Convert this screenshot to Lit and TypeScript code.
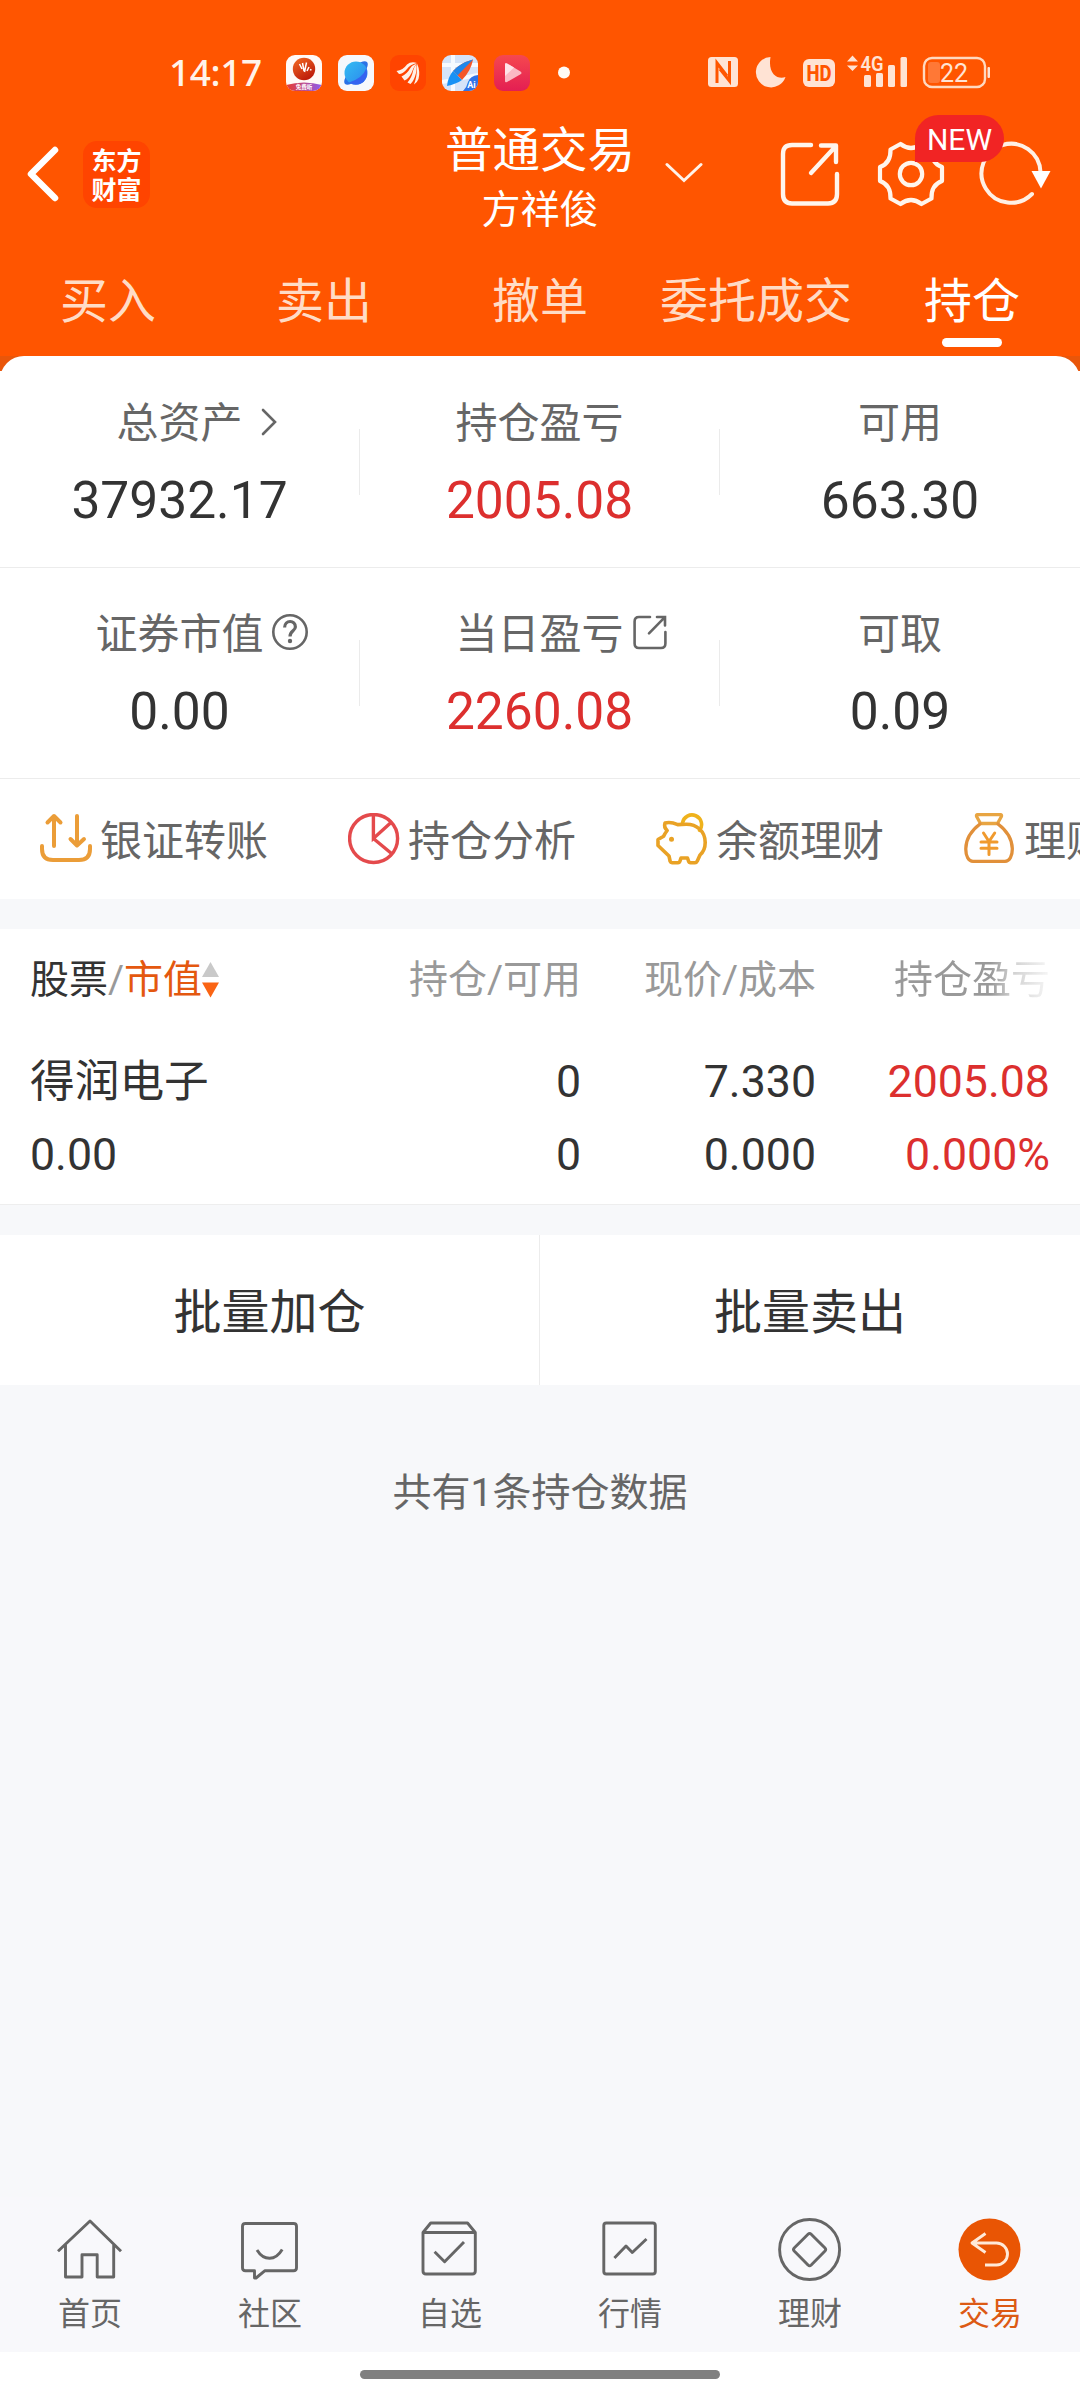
import { LitElement, html, svg, css, nothing, TemplateResult } from "lit";
import { customElement } from "lit/decorators.js";
import { classMap } from "lit/directives/class-map.js";

type Glyph = TemplateResult;

interface AssetCell {
  label: string;
  value: string;
  up?: boolean;
  icon?: "chevron" | "help" | "share";
}

const assetRows: AssetCell[][] = [
  [
    { label: "总资产", value: "37932.17", icon: "chevron" },
    { label: "持仓盈亏", value: "2005.08", up: true },
    { label: "可用", value: "663.30" },
  ],
  [
    { label: "证券市值", value: "0.00", icon: "help" },
    { label: "当日盈亏", value: "2260.08", up: true, icon: "share" },
    { label: "可取", value: "0.09" },
  ],
];

const tabs = ["买入", "卖出", "撤单", "委托成交", "持仓"];

const labelIcons: Record<string, Glyph> = {
  chevron: html`<svg class="licon chev" width="16" height="28" viewBox="0 0 16 28">
    <path d="M2 2 L14 14 L2 26" fill="none" stroke="#666" stroke-width="2.6" stroke-linecap="round" />
  </svg>`,
  help: html`<svg class="licon help" width="38" height="38" viewBox="0 0 38 38">
    <circle cx="19" cy="19" r="16.7" fill="none" stroke="#666" stroke-width="2.6" />
    <path d="M13.6 14.6 C13.6 6.6 24.6 6.6 24.4 14 C24.2 18 19 17.6 19 23.4" fill="none" stroke="#666" stroke-width="3.2" />
    <circle cx="19" cy="28" r="2.2" fill="#666" />
  </svg>`,
  share: html`<svg class="licon share" width="34" height="35" viewBox="0 0 34 35">
    <g fill="none" stroke="#666" stroke-width="2.6" stroke-linecap="round">
      <path d="M17 2 H6 Q1.6 2 1.6 6.5 V28.5 Q1.6 33 6 33 H28 Q32.4 33 32.4 28.5 V17" />
      <path d="M24 2 H32 V10.5 M31.4 2.6 L16 18.4" />
    </g>
  </svg>`,
};

const shortcuts: { label: string; icon: Glyph }[] = [
  {
    label: "银证转账",
    icon: svg`<g fill="none" stroke="#eb9d38" stroke-width="4" stroke-linecap="round" stroke-linejoin="round">
      <path d="M2 33 V36 Q2 47 13 47 H39 Q50 47 50 36 V33" />
      <path d="M14 3 V33 M7.5 9.5 L14 3 L20.5 9.5 M37 3 V32 M30.5 26 L37 32.5 L44 26" />
    </g>`,
  },
  {
    label: "持仓分析",
    icon: svg`<g fill="none" stroke="#e44a4c" stroke-width="3.4">
      <circle cx="25.6" cy="25.5" r="24" />
      <path d="M25.4 2 V25.5 L43 9.5 M25.4 25.5 L43.5 40.5" />
    </g>`,
  },
  {
    label: "余额理财",
    icon: svg`<g fill="none" stroke-width="3.6" stroke-linejoin="round" stroke-linecap="round">
      <path stroke="#efb21c" d="M26.5 10 A9.6 9.6 0 1 1 43.6 17.4" />
      <path stroke="#e9a225" d="M21.7 11.6 C17 9.5 12.5 9 9 10 C8 13 9 15.500 11.2 17.500 C9.600 19.500 8.600 21 7.600 23.300 L2 26.500 V32.500 L13 43 L14.200 48.500 Q14.600 49.700 16 49.700 H22 Q23.500 49.700 24 48 L25 45 H31.500 L32.500 48 Q33 49.700 34.500 49.700 H39 Q40.500 49.700 41.300 48 L44 42 C48 38.500 49.200 34 49.200 29.500 C49.200 18 40.500 11 30 11.200 Z" />
      <circle cx="15.500" cy="26.300" r="2.500" fill="#e9a225" stroke="none" />
    </g>`,
  },
  {
    label: "理财",
    icon: svg`<g fill="none" stroke-width="3.300" stroke-linejoin="round" stroke-linecap="round">
      <path stroke="#e8a542" d="M16.500 10.500 L12.600 3.500 Q12 1.600 14 1.600 H36 Q38 1.600 37.400 3.500 L33.500 10.500 Z" />
      <path stroke="#e1903a" d="M16 11 C8 17 2 26 1.800 35.500 C1.600 43 4.500 48.300 9 48.300 H41 C45.500 48.300 48.500 43 48.300 35.500 C48 26 42 17 34 11" />
      <path stroke="#f09a2e" stroke-width="3" d="M19.500 20 L25 28.500 L30.700 20 M25 28.500 V41.500 M17 29 H33 M17 35.300 H33" />
    </g>`,
  },
];

const dock: { label: string; icon: Glyph; active?: boolean }[] = [
  { label: "首页", icon: svg`<path d="M1 34.300 L33 4 L64 34.300 M8.500 28 V60 H25 V37.700 H40.200 V60 H56.700 V28" />` },
  {
    label: "社区",
    icon: svg`<path d="M28 53.700 H56.500 Q59.500 53.700 59.500 50.700 V9.300 Q59.500 6.500 56.500 6.500 H8.500 Q5.500 6.500 5.500 9.300 V50.700 Q5.500 53.700 8.500 53.700 H17.500 V61 H19 Z" /><path d="M20 33 Q25 41.300 32.600 41.300 Q40 41.300 45.200 32.500" />`,
  },
  {
    label: "自选",
    icon: svg`<path d="M6 15.500 L13.700 6 H50.500 L58.300 15.500 V54 Q58.300 57 55.300 57 H9 Q6 57 6 54 Z M6 15.500 H58.300 M17.600 34.700 L27.600 44.700 L47 25" />`,
  },
  {
    label: "行情",
    icon: svg`<rect x="6.800" y="6" width="51.500" height="51" rx="2.500" /><path d="M17.400 41 L29 29 L35.300 35.500 L49.500 22" />`,
  },
  {
    label: "理财",
    icon: svg`<circle cx="32.600" cy="32.500" r="30" /><path d="M31 17.300 Q32.600 15.700 34.200 17.300 L48 31 Q49.500 32.500 48 34 L34.200 48 Q32.600 49.500 31 48 L17.200 34 Q15.800 32.500 17.200 31 Z" />`,
  },
  {
    label: "交易",
    active: true,
    icon: svg`<circle cx="32.500" cy="32.500" r="31" fill="#e95504" stroke="none" /><path stroke="#ffe9d8" d="M28.500 16.500 L15 26 L28.500 35.500 M15 26 H39.500 A11 11 0 0 1 39.500 48 H28" />`,
  },
];

@customElement("app-root")
export class AppRoot extends LitElement {
  static styles = css`
    :host {
      display: block;
      width: 1080px;
      height: 2400px;
      overflow: hidden;
      background: #f7f8fa;
      color: #333;
      font-family: Roboto, "Noto Sans CJK SC", sans-serif;
    }
    .screen { display: flex; flex-direction: column; height: 2400px; }
    svg { display: block; flex: none; }

    .header { background: #ff5500; height: 356px; color: #fff; display: flex; flex-direction: column; }
    .status { display: flex; height: 123px; }
    .time {
      width: 117px; margin-left: 169px; padding-top: 48px;
      font: 500 37px/48px "Noto Sans", sans-serif; letter-spacing: -0.4px;
      color: #fff3ea;
    }
    .apps { display: flex; gap: 16px; padding-top: 55px; width: 422px; }
    .sys { padding-top: 48px; }
    .bar { display: grid; grid-template-columns: 440px 200px 440px; height: 149px; }
    .left { display: flex; padding: 18px 0 0 25px; }
    .back { margin-top: 4px; }
    .logo {
      width: 67px; height: 65px; margin-left: 22px; padding-bottom: 2px; border-radius: 14px; background: #ff4400;
      font: 700 25px/29px "Noto Sans CJK SC", sans-serif;
      display: flex; align-items: center; justify-content: center; text-align: center;
    }
    .title { text-align: center; white-space: nowrap; }
    .name { font-size: 47.500px; line-height: 56px; }
    .user { font-size: 39px; line-height: 48px; margin-top: 7px; }
    .right { display: flex; padding-left: 25px; }
    .down { margin-top: 39px; }
    .out { margin: 19px 0 0 77px; }
    .gearbox { position: relative; margin: 17px 0 0 37px; }
    .badge {
      position: absolute; left: 38px; top: -25px; width: 89px; height: 47px; z-index: 1;
      border-radius: 24px 24px 24px 0; background: #f12424;
      font-size: 30px; line-height: 49px; text-align: center;
    }
    .reload { margin: 18px 0 0 33px; }

    .tabs { display: grid; grid-template-columns: repeat(5, 216px); }
    .tab {
      display: flex; flex-direction: column; align-items: center;
      font-size: 48px; line-height: 60px; color: #ffdcc6; white-space: nowrap;
    }
    .tab.on { color: #fff; }
    .mark { width: 60px; height: 9px; border-radius: 5px; background: #fff; margin-top: 6px; }

    .shell { background: linear-gradient(#e9560a 15px, #fff 15px); }
    .assets { background: #fff; border-radius: 24px 24px 0 0; }
    .arow { display: grid; grid-template-columns: 359px 1px 359px 1px 360px; height: 211px; border-bottom: 1px solid #ececec; }
    .arow + .arow { height: 210px; }
    .arow + .arow .cell { padding-top: 43px; }
    .arow + .arow .split { margin-top: 72px; }
    .split { background: #ebebeb; height: 66px; margin-top: 73px; }
    .cell { padding-top: 44px; display: flex; flex-direction: column; align-items: center; }
    .label { display: flex; align-items: center; font-size: 42px; line-height: 48px; color: #666; height: 48px; }
    .chev { margin: -4px -34px 0 18px; }
    .help { margin: -6px -45px 0 7px; }
    .share { margin: -6px -43px 0 9px; }
    .value { font-size: 51.500px; line-height: 60px; margin-top: 23px; }
    .up { color: #dc2f2e; }

    .quick { display: flex; gap: 80px; height: 120px; background: #fff; padding-left: 40px; overflow: hidden; }
    .item { display: flex; gap: 8px; flex: none; padding-top: 34px; font-size: 42px; line-height: 58px; color: #666; }

    .table { background: #fff; margin-top: 30px; height: 275px; border-bottom: 1px solid #eee; }
    .trow { display: grid; grid-template-columns: 301px 250px 235px 234px; padding-left: 30px; }
    .trow > .num { text-align: right; }
    .thead { font-size: 39px; line-height: 48px; color: #999; padding-top: 27px; white-space: nowrap; }
    .first { display: flex; }
    .dark { color: #333; }
    .slash { width: 16px; text-align: center; }
    .hot { color: #e4580f; }
    .sort { margin: 6px 0 0 0; }
    .fade {
      background: linear-gradient(90deg, #999 0, #999 62%, rgba(153, 153, 153, 0.450) 76%, rgba(153, 153, 153, 0.080) 100%);
      background-clip: text; -webkit-background-clip: text; color: transparent;
    }
    .line1 { font-size: 44.700px; line-height: 56px; margin-top: 50px; }
    .line2 { font-size: 44.700px; line-height: 56px; margin-top: 17px; }

    .batch { display: grid; grid-template-columns: 539px 540px; gap: 1px; margin-top: 30px; height: 150px; background: #ececec; }
    .btn { background: #fff; text-align: center; font-size: 48px; line-height: 144px; padding-top: 6px; }
    .note { text-align: center; font-size: 39px; line-height: 48px; color: #666; margin-top: 84px; flex: 1; }

    .dock { display: grid; grid-template-columns: repeat(6, 180px); height: 155px; background: #f8f8fb; }
    .entry { display: flex; flex-direction: column; align-items: center; padding-top: 20px; color: #666; font-size: 32px; line-height: 40px; }
    .entry.on { color: #dc5a14; }
    .cap { margin-top: 11px; }
    .home { height: 48px; background: #fff; display: flex; justify-content: center; }
    .pill { width: 360px; height: 9px; margin-top: 18px; border-radius: 5px; background: #808080; }
  `;

  private appIcons() {
    return html`
      <svg width="36" height="36" viewBox="0 0 36 36">
        <defs>
          <clipPath id="r1"><rect width="36" height="36" rx="9" /></clipPath>
          <linearGradient id="g1" x1="0" x2="1"><stop offset="0" stop-color="#e93b2c" /><stop offset="1" stop-color="#8d5cf0" /></linearGradient>
          <linearGradient id="g2" x1="0.200" x2="0.800" y1="0" y2="1"><stop offset="0" stop-color="#f06420" /><stop offset="1" stop-color="#b81508" /></linearGradient>
        </defs>
        <g clip-path="url(#r1)">
          <rect width="36" height="36" fill="#fffaf7" />
          <path d="M0 30 Q18 25 36 30 V36 H0 Z" fill="url(#g1)" />
          <circle cx="18" cy="14" r="11.200" fill="url(#g2)" />
          <path d="M13.500 9 L16 14 M16.500 8 L18 16 M20.500 7.500 L18.500 17 M23 12 L21 16 M25 14 L24.500 15.500" stroke="#fff" stroke-width="1.500" />
          <text x="18" y="34" font-size="5.500" font-weight="700" fill="#fff" text-anchor="middle">免费听</text>
        </g>
      </svg>
      <svg width="36" height="36" viewBox="0 0 36 36">
        <defs><linearGradient id="g3" x1="0" y1="0" x2="1" y2="1"><stop offset="0" stop-color="#34bdf2" /><stop offset="1" stop-color="#2b86ee" /></linearGradient></defs>
        <rect width="36" height="36" rx="9" fill="#f6f8fc" />
        <ellipse cx="18" cy="18" rx="15.500" ry="6" transform="rotate(-45 18 18)" fill="#2a72e6" />
        <circle cx="18" cy="18" r="11.500" fill="url(#g3)" />
        <path d="M28.500 13 Q25 23 11 27.500 Q16 31 22 29 Q31 25 28.500 13Z" fill="#3563f0" />
      </svg>
      <svg width="36" height="36" viewBox="0 0 36 36">
        <rect width="36" height="36" rx="9" fill="#ff4400" />
        <g fill="#fff0e6">
          <path d="M6.500 16 Q13 15 17 9.500 Q21 6 27 8 Q20 9.500 17 14 Q13 19 9 19 Z" />
          <path d="M11.500 21.500 Q17 19 20 13.500 Q22.500 10 26.500 8.500 Q23 13 21.500 18 Q18.500 24 14.500 25.500 Z" />
          <path d="M17.500 27.500 Q22 22 23 16 Q24.500 11 26.500 9 Q27 13 26 18 Q24 26 20.500 29 Z" />
          <path d="M24 29.500 Q27 21 26.800 15 L27.200 8.500 Q30.500 17 28.500 24 Q27 28 24 29.500 Z" />
        </g>
      </svg>
      <svg width="36" height="36" viewBox="0 0 36 36">
        <defs><clipPath id="r4"><rect width="36" height="36" rx="9" /></clipPath></defs>
        <g clip-path="url(#r4)">
          <rect width="36" height="36" fill="#d5e3f8" />
          <path d="M0 10 H36 M11 0 V36 M0 27 L36 20" stroke="#f6faff" stroke-width="4" />
          <path d="M31 4.500 Q18 8 11 16 L20 25 Q29 16 31 4.500Z" fill="#f4572a" />
          <path d="M31 4.500 Q18 8 11 16 L15.500 20.500 Z" fill="#1f86ea" />
          <path d="M11 16 L20 25 Q14 29 5 31 Q6 22 11 16Z" fill="#1791f5" />
          <path d="M36 20 V36 H21 Q25 32 26 27 Q28 21 36 20Z" fill="#2f73e8" />
          <text x="29.500" y="32.500" font-size="9" font-weight="700" fill="#fff" text-anchor="middle">Ai</text>
        </g>
      </svg>
      <svg width="36" height="36" viewBox="0 0 36 36">
        <defs><linearGradient id="g5" x1="0" y1="0" x2="0" y2="1"><stop offset="0" stop-color="#f5484f" /><stop offset="1" stop-color="#e31e53" /></linearGradient></defs>
        <rect width="36" height="36" rx="9" fill="url(#g5)" />
        <path d="M11 9.500 Q11 7.500 13 8.500 L26.500 16.500 Q28.500 18 26.500 19.200 L13 27 Q11 28 11 26Z" fill="#fbb9c4" />
        <path d="M11 9.500 Q11 7.500 13 8.500 L20 12.500 L11 21Z" fill="#ffe3e7" />
      </svg>
      <svg width="36" height="36" viewBox="0 0 36 36"><circle cx="18" cy="17.500" r="6" fill="#fffaf5" /></svg>
    `;
  }

  private systemIcons() {
    return html`<svg width="300" height="48" viewBox="708 48 300 48">
      <g fill="#ffe3d4">
        <rect x="708" y="57" width="30" height="30" rx="3.500" />
        <path d="M717 83 V63 L727 76 M729.500 61 V81 L720 69" fill="none" stroke="#ff5500" stroke-width="3" />
        <path d="M770.500 57 A15.200 15.200 0 1 0 785.500 77 C778 80 767.500 74 770.500 57 Z" />
        <rect x="803" y="59" width="32" height="28" rx="6" />
        <text x="819" y="81" font-size="22" font-weight="800" textLength="25" lengthAdjust="spacingAndGlyphs" text-anchor="middle" fill="#ff5500">HD</text>
        <path d="M847 61.500 L852.500 55.500 L858 61.500 Z M847 65.500 L852.500 71 L858 65.500 Z" />
        <text x="872" y="71" font-size="21" font-weight="600" textLength="23" lengthAdjust="spacingAndGlyphs" text-anchor="middle">4G</text>
        <rect x="864" y="75" width="7" height="12" rx="1.500" />
        <rect x="876" y="73" width="7" height="14" rx="1.500" />
        <rect x="888" y="65" width="7" height="22" rx="1.500" />
        <rect x="900.500" y="57" width="6.500" height="30" rx="1.500" />
        <rect x="928" y="62" width="12" height="21" rx="3" fill="#ff7836" />
        <text x="954" y="81.500" font-size="25" text-anchor="middle">22</text>
        <rect x="987.500" y="67" width="2.500" height="11" rx="1" />
      </g>
      <rect x="924" y="58" width="61" height="29" rx="8" fill="none" stroke="#ffd9c0" stroke-width="2.400" />
    </svg>`;
  }

  private header() {
    return html`<header class="header">
      <div class="status">
        <div class="time">14:17</div>
        <div class="apps">${this.appIcons()}</div>
        <div class="sys">${this.systemIcons()}</div>
      </div>
      <div class="bar">
        <div class="left">
          <svg class="back" width="36" height="58" viewBox="0 0 36 58">
            <path d="M30 5 L6 29 L30 53" fill="none" stroke="#fff" stroke-width="6.500" stroke-linecap="round" stroke-linejoin="round" />
          </svg>
          <div class="logo">东方<br />财富</div>
        </div>
        <div class="title">
          <div class="name">普通交易</div>
          <div class="user">方祥俊</div>
        </div>
        <div class="right">
          <svg class="down" width="38" height="21" viewBox="0 0 38 21">
            <path d="M2 2.500 L19 18.500 L36 2.500" fill="none" stroke="#fff3ea" stroke-width="3" stroke-linecap="round" />
          </svg>
          <svg class="out" width="60" height="65" viewBox="0 0 60 65">
            <g fill="none" stroke="#fff5ec" stroke-width="4.400" stroke-linecap="round" stroke-linejoin="round">
              <path d="M31 3 H12 Q3 3 3 12 V52 Q3 61.500 12 61.500 H48 Q57 61.500 57 52 V32" />
              <path d="M41 3.500 H56 V20 M55 5 L31 31" />
            </g>
          </svg>
          <div class="gearbox">
            <svg width="68" height="68" viewBox="-34 -34 68 68">
              <g fill="none" stroke="#fff5ec" stroke-width="4.200" stroke-linejoin="round">
                <path d="M10.500 -30 L20.500 -24.500 Q20 -11 31 -7 V7 Q20 11 20.500 24.500 L10.500 30 Q0 22 -10.500 30 L-20.500 24.500 Q-20 11 -31 7 V-7 Q-20 -11 -20.500 -24.500 L-10.500 -30 Q0 -22 10.500 -30 Z" />
                <circle r="11.200" />
              </g>
            </svg>
            <span class="badge">NEW</span>
          </div>
          <svg class="reload" width="74" height="66" viewBox="0 0 74 66">
            <path d="M54 53 A29.500 29.500 0 1 1 62.500 31" fill="none" stroke="#fff0e4" stroke-width="4" stroke-linecap="round" />
            <path d="M53.500 30 H72.500 L63 47.500 Z" fill="#fff" />
          </svg>
        </div>
      </div>
      <nav class="tabs">
        ${tabs.map((t, i) => {
          const on = i === tabs.length - 1;
          return html`<div class=${classMap({ tab: true, on })}>${t}${on ? html`<span class="mark"></span>` : nothing}</div>`;
        })}
      </nav>
    </header>`;
  }

  private assetRow(cells: AssetCell[]) {
    return html`<div class="arow">
      ${cells.map(
        (c, i) => html`${i ? html`<span class="split"></span>` : nothing}
          <div class="cell">
            <div class="label"><span>${c.label}</span>${c.icon ? labelIcons[c.icon] : nothing}</div>
            <div class=${classMap({ value: true, up: !!c.up })}>${c.value}</div>
          </div>`
      )}
    </div>`;
  }

  render() {
    return html`<div class="screen">
      ${this.header()}
      <div class="shell"><section class="assets">${assetRows.map((r) => this.assetRow(r))}</section></div>
      <section class="quick">
        ${shortcuts.map(
          (s) => html`<div class="item"><svg width="52" height="52" viewBox="0 0 52 52">${s.icon}</svg><span>${s.label}</span></div>`
        )}
      </section>
      <section class="table">
        <div class="trow thead">
          <div class="first">
            <span class="dark">股票</span><span class="slash">/</span><span class="hot">市值</span>
            <svg class="sort" width="17" height="36" viewBox="0 0 17 36">
              <path d="M8.500 0 L17 15 H0 Z" fill="#c9c9c9" /><path d="M0 20.500 H17 L8.500 35.500 Z" fill="#fa6414" />
            </svg>
          </div>
          <div class="num">持仓/可用</div>
          <div class="num">现价/成本</div>
          <div class="num"><span class="fade">持仓盈亏</span></div>
        </div>
        <div class="trow line1"><div>得润电子</div><div class="num">0</div><div class="num">7.330</div><div class="num up">2005.08</div></div>
        <div class="trow line2"><div>0.00</div><div class="num">0</div><div class="num">0.000</div><div class="num up">0.000%</div></div>
      </section>
      <section class="batch"><div class="btn">批量加仓</div><div class="btn">批量卖出</div></section>
      <div class="note">共有1条持仓数据</div>
      <nav class="dock">
        ${dock.map(
          (d) => html`<div class=${classMap({ entry: true, on: !!d.active })}>
            <svg width="66" height="66" viewBox="0 0 66 66"><g fill="none" stroke="#666" stroke-width="2.900" stroke-linejoin="round">${d.icon}</g></svg>
            <span class="cap">${d.label}</span>
          </div>`
        )}
      </nav>
      <div class="home"><div class="pill"></div></div>
    </div>`;
  }
}
